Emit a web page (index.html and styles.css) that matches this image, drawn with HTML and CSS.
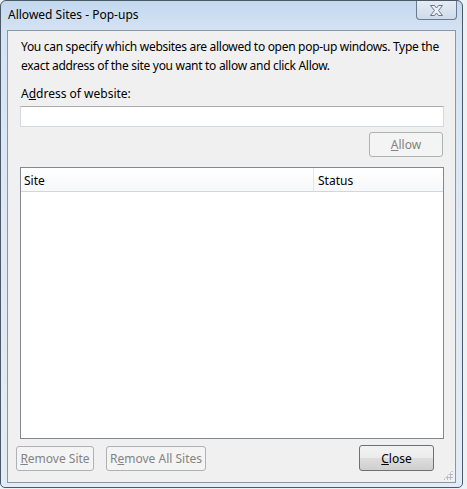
FILE: index.html
```html
<!DOCTYPE html>
<html lang="en">
<head>
    <meta charset="UTF-8">
    <title>Allowed Sites - Pop-ups</title>
    <link rel="stylesheet" href="styles.css">
</head>
<body>
    <div class="window">
        <div class="titlebar">
            <span class="title">Allowed Sites - Pop-ups</span>
            <button class="close-x" type="button">
                <svg width="17" height="11" viewBox="0 0 17 11">
                    <path d="M2.5 0.5 H6.5 L8.5 3 L10.5 0.5 H14.5 L10.5 5.5 L14.5 10.5 H10.5 L8.5 8 L6.5 10.5 H2.5 L6.5 5.5 Z" fill="#eef2f7" stroke="#6b7584" stroke-width="1"/>
                </svg>
            </button>
        </div>

        <div class="client">
            <p class="intro">You can specify which websites are allowed to open pop-up windows. Type the exact address of the site you want to allow and click Allow.</p>

            <label class="field-label" for="address">A<u>d</u>dress of website:</label>
            <input class="address" type="text" id="address">

            <div class="allow-row">
                <button class="btn disabled" type="button"><u>A</u>llow</button>
            </div>

            <div class="list">
                <div class="list-head">
                    <div class="col-site">Site</div>
                    <div class="col-status">Status</div>
                </div>
            </div>

            <div class="footer">
                <button class="btn disabled remove" type="button"><u>R</u>emove Site</button>
                <button class="btn disabled remove-all" type="button">R<u>e</u>move All Sites</button>
                <span class="spacer"></span>
                <button class="btn close" type="button"><u>C</u>lose</button>
            </div>
            <div class="grip"></div>
        </div>
    </div>
</body>
</html>
```

FILE: styles.css
```css
body {
    margin: 0;
    background-color: #eef1f4;
    font-family: "Noto Sans", "Open Sans", sans-serif;
    font-size: 12px;
    color: #000;
}

.window {
    width: 461px;
    height: 486px;
    border: 1px solid #4a5868;
    border-radius: 6px 6px 5px 5px;
    background: linear-gradient(to bottom, #c4d8ee 0px, #d4e3f3 30px, #dde8f4 200px, #e3ecf6 100%);
    display: flex;
    flex-direction: column;
}

.titlebar {
    height: 29px;
    display: flex;
    align-items: flex-start;
    justify-content: space-between;
    padding-left: 7px;
}

.title {
    margin-top: 6px;
    line-height: 16px;
    font-size: 12px;
    color: #000;
}

.close-x {
    width: 41px;
    height: 19px;
    margin-right: 5px;
    padding: 0;
    border: 1px solid #6b7a8e;
    border-top: none;
    border-radius: 0 0 4px 4px;
    background: linear-gradient(to bottom, #e4ecf5, #cfdbea);
    display: flex;
    align-items: center;
    justify-content: center;
}

.client {
    margin: 0 6px 4px 6px;
    flex: 1;
    border: 1px solid #8a96a6;
    background-color: #f0f0f0;
    padding: 6px 11px 0 12px;
    display: flex;
    flex-direction: column;
    position: relative;
}

.intro {
    margin: 0 0 0 1px;
    line-height: 19px;
    letter-spacing: -0.3px;
}

.field-label {
    margin-top: 9px;
    margin-left: 1px;
    line-height: 19px;
}

.address {
    margin-top: 3px;
    height: 21px;
    box-sizing: border-box;
    border: 1px solid #d4d9df;
    border-top-color: #abadb3;
    background: #fff;
    font: inherit;
}

.allow-row {
    display: flex;
    justify-content: flex-end;
    margin-top: 5px;
    padding-right: 1px;
}

.btn {
    height: 25px;
    box-sizing: border-box;
    font: inherit;
    font-size: 12px;
    padding: 0;
    border-radius: 3px;
}

.btn.disabled {
    border: 1px solid #adb2b5;
    background: #f4f4f4;
    color: #838383;
}

.allow-row .btn {
    width: 74px;
}

.list {
    margin-top: 10px;
    height: 270px;
    border: 1px solid #828790;
    background: #fff;
}

.list-head {
    display: flex;
    height: 23px;
    border-bottom: 1px solid #d5d5d5;
    background: linear-gradient(to bottom, #ffffff, #f7f8fa);
    line-height: 26px;
}

.col-site {
    width: 289px;
    padding-left: 3px;
    border-right: 1px solid #e3e5e8;
}

.col-status {
    padding-left: 4px;
}

.footer {
    display: flex;
    margin: 7px 0 0 -4px;
    padding-right: 10px;
}

.remove {
    width: 78px;
}

.remove-all {
    width: 100px;
    margin-left: 12px;
}

.spacer {
    flex: 1;
}

.btn.close {
    width: 75px;
    margin-top: -1px;
    height: 26px;
    border: 1px solid #707070;
    background: linear-gradient(to bottom, #f2f2f2 0%, #ebebeb 50%, #dddddd 51%, #cfcfcf 100%);
    color: #000;
}

.grip {
    position: absolute;
    right: 2px;
    bottom: 2px;
    width: 10px;
    height: 10px;
    background-image: radial-gradient(circle, #b5bcc6 1px, transparent 1.2px);
    background-size: 3px 3px;
    clip-path: polygon(100% 0, 100% 100%, 0 100%);
}
```
